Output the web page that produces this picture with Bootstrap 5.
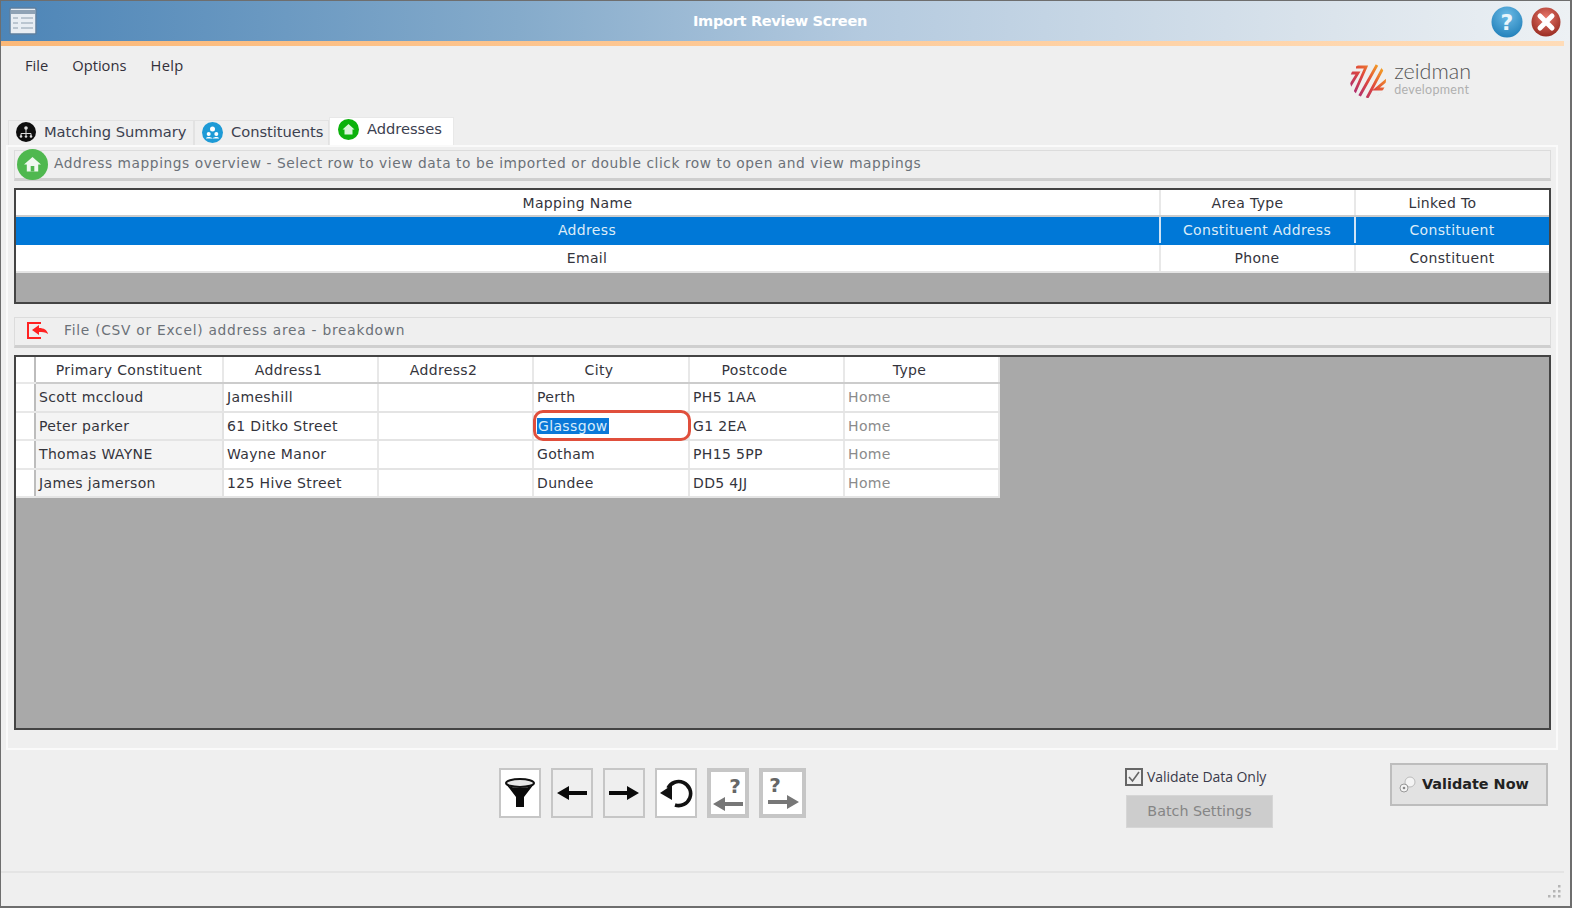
<!DOCTYPE html>
<html lang="en"><head><meta charset="utf-8"><title>Import Review Screen</title>
<link href="https://cdn.jsdelivr.net/npm/bootstrap@5.3.0/dist/css/bootstrap.min.css" rel="stylesheet">
<style>
html,body{height:100%;margin:0;background:#efefef;overflow:hidden}
body{font-family:"DejaVu Sans",Verdana,sans-serif;font-size:13.3px;color:#333}
.appwin{height:908px;width:1572px;border:1px solid #6e6e6e;border-width:1px 2px 2px 1px;background:#efefef;display:flex;flex-direction:column}
.ttl{height:40px;flex:none;background:linear-gradient(90deg,#4d85b7 0%,#85abcb 33%,#b4cadf 55%,#dbe4ec 85%,#edf1f4 100%);position:relative}
.ttl-text{font-weight:700;color:#fff;font-size:14.6px;left:0;right:11px;top:0;text-align:center;line-height:40px;position:absolute;font-family:"DejaVu Sans",sans-serif;letter-spacing:-.35px}
.accent{height:5px;margin-right:6px;flex:none;background:linear-gradient(90deg,#fbb878,#ffdcb8)}
.head-area{height:71px;flex:none;padding-left:12px;padding-right:99px}
.menu-it{padding:8px 12px 0;font-family:"Open Sans",sans-serif;font-size:14.7px;color:#33303a}
.menu-it:last-child{letter-spacing:.35px}
.logo-txt{line-height:1;font-family:"Lato",sans-serif}
.logo-a{font-size:21.5px;color:#555;font-weight:300}
.logo-b{font-size:12.5px;color:#b0b0b0;margin-top:1px;letter-spacing:.3px}
.tabs-row{padding-left:7px;height:28px;flex:none;align-items:flex-end}
.tab-it{height:25px;background:#efefef;border:1px solid #e2e2e2;border-bottom:0;padding:0 0 2px 7px;display:flex;align-items:center;gap:8px;font-size:14.7px;color:#3c4150;letter-spacing:-.05px;white-space:nowrap}
.tab-it.on{height:28px;background:#fff;border-color:#e8e8e8;padding:0 0 4px 8px;font-size:14.7px}
.tab-a{width:186px}.tab-b{width:135px;gap:8px}.tab-c{width:125px}
.frame{width:1552px;height:605px;flex:none;margin-left:5px;border:2px solid #fafafa;padding:3px 5px 0 6px;background:#efefef}
.strip{height:31px;border:1px solid #dcdcdc;border-bottom:3px solid #cfcfcf;display:flex;align-items:center;color:#6b7178;font-size:13.75px;background:#efefef;position:relative;padding-bottom:3px}
.strip-a{padding-left:39px;letter-spacing:.56px}
.strip-b{padding-left:49px;margin-top:13px;letter-spacing:.75px}
.strip-ico{position:absolute;left:2px;top:-2px}
.strip-ico2{position:absolute;left:11px;top:3px}
.well-a,.well-b{border:2px solid #444;background:#a9a9a9;margin-top:7px}
.well-a{height:116px}.well-b{height:375px}
.grid{border-collapse:collapse;table-layout:fixed;background:#fff;margin:0}
.grid td,.grid th{font-weight:400;border:0;border-right:2px solid #e8e8e8;border-bottom:2px solid #e4e4e4;padding:0;white-space:nowrap;font-size:14px;color:#34343c;letter-spacing:.35px;overflow:visible}
.grid th{text-align:center;border-bottom-color:#ccc;padding-top:2px}
.grid td{padding-top:1px}
.grid-a{width:1533px}.grid-b{width:983px}
.grid-a th{height:26px;padding-right:20px}
.grid-a td{height:28.5px;text-align:center;padding-right:1px}
.grid-a tr.sel td{height:27.500px;background:#0078d7;color:#dcecf8;border-bottom-color:#0078d7;border-right-color:#cfe3f5}
.grid-a th:last-child,.grid-a td:last-child{border-right:0}
.grid-b td{padding-left:3px;height:28.5px}
.grid-b th{height:26px;padding-right:24px}
.grid-b th.pc{padding-right:0}
.grid-b td.rh,.grid-b th.rh{padding:0;border-right:2px solid #bdbdbd;background:#fff;border-bottom-color:#e8e8e8}
.grid-b td.first{background:#f4f4f4;border-right-color:#e2e2e2}
.grid-b td.muted-t{color:#8b8b8b}
.hit{position:relative}
.hit-ring{position:absolute;left:-1px;right:-3px;top:-3px;bottom:-2px;border:3.5px solid #e04f3c;border-radius:10px;pointer-events:none}
.hit-sel{background:#0a78d8;color:#d8ecfb;padding:0 1px}
.foot{height:121px;flex:none;position:relative;padding-top:18px;padding-left:498px}
.tool{width:42px;height:50px;border:2px solid #c6c6c6;background:#efefef;margin-right:10px;padding:0;display:flex;align-items:center;justify-content:center;border-radius:0}
.tool.w{background:#fff}.tool.k{border-width:4px}.tool.wide{width:47px;margin-right:0}
.valid-box{position:absolute;left:1124px;top:16px;width:150px}
.chk{width:18px;height:18px;border:2px solid #666;background:#efefef;display:block;flex:none}
.chk-l{font-family:"Open Sans",sans-serif;font-size:14px;color:#3a3a4a;letter-spacing:-.06px}
.batch,.batch:disabled{background:#cdcdcd;border:1px solid #d6d6d6;border-radius:0;color:#858585;font-size:14.3px;width:147px;height:33px;padding:0;margin-top:8px;margin-left:1px;display:block;opacity:1}
.now{position:absolute;left:1389px;top:13px;width:158px;height:43px;background:#e2e2e2;border:2px solid #bdbdbd;border-radius:0;font-weight:700;color:#222;font-size:14.4px;padding:0 0 0 7px;display:flex;align-items:center;gap:6px}
.end-bar{height:39px;flex:none;border-top:2px solid #e4e4e4;margin-right:6px;position:relative}
.grip{position:absolute;right:2px;bottom:11px}
</style></head>
<body>
<div class="appwin">
  <div class="ttl d-flex align-items-center justify-content-between">
    <svg class="ms-2" width="28" height="28" viewBox="0 0 28 28"><rect x="1" y="1" width="26" height="26" rx="1" fill="#e8edf3" stroke="#5d7f9e" stroke-width="1.5"/><rect x="2" y="3" width="24" height="4" fill="#8fa2b5"/><g stroke="#8d9eae" stroke-width="1"><path d="M4 11h5M12 11h12M4 16h5M12 16h12M4 21h5M12 21h12"/></g></svg>
    <div class="ttl-text">Import Review Screen</div>
    <div class="d-flex align-items-center gap-2 hdr-btns" style="margin-right:9px;margin-top:2px;position:relative">
      <svg width="32" height="32" viewBox="0 0 32 32"><defs><radialGradient id="hb" cx=".5" cy=".3" r=".8"><stop offset="0" stop-color="#6cbbe6"/><stop offset="1" stop-color="#1a7ab5"/></radialGradient><radialGradient id="cb" cx=".5" cy=".35" r=".75"><stop offset="0" stop-color="#e8776a"/><stop offset="1" stop-color="#8e2218"/></radialGradient></defs><circle cx="16" cy="16" r="15.5" fill="url(#hb)"/><text x="16" y="24" text-anchor="middle" font-family="DejaVu Sans" font-weight="700" font-size="22" fill="#eaf5fb">?</text></svg>
      <svg width="30" height="30" viewBox="0 0 30 30"><circle cx="15" cy="15" r="14.5" fill="url(#cb)"/><path d="M9 9l12 12M21 9L9 21" stroke="#fff" stroke-width="5" stroke-linecap="round"/></svg>
    </div>
  </div>
  <div class="accent"></div>
  <div class="head-area d-flex justify-content-between">
    <div class="d-flex">
      <div class="menu-it">File</div><div class="menu-it">Options</div><div class="menu-it">Help</div>
    </div>
    <div class="d-flex align-items-center gap-2" style="margin-top:-3px">
      <svg width="36" height="36" viewBox="0 0 36 36"><defs><clipPath id="lc"><circle cx="18" cy="18" r="18"/></clipPath><linearGradient id="lg" gradientUnits="userSpaceOnUse" x1="2" y1="32" x2="32" y2="4"><stop offset="0" stop-color="#a82a78"/><stop offset=".5" stop-color="#e0483c"/><stop offset="1" stop-color="#f5a623"/></linearGradient></defs><g clip-path="url(#lc)" fill="none" stroke="url(#lg)" stroke-width="2.800"><path d="M-1 11H8L0 24M6 5H16L4 32M9 35L27 3M17 36L33 6M38 17L26 27H38M26 37L33 31"/></g></svg>
      <div class="logo-txt" style="padding-bottom:3px"><div class="logo-a">zeidman</div><div class="logo-b">development</div></div>
    </div>
  </div>
  <div class="tabs-row d-flex">
    <div class="tab-it tab-a"><svg width="20" height="20" viewBox="0 0 20 20"><circle cx="10" cy="10" r="10" fill="#0d0d0d"/><path d="M10 5v8M5 14v-2.500h10V14" stroke="#ddd" fill="none"/><circle cx="10" cy="6" r="1.800" fill="#ddd"/><circle cx="5" cy="14.500" r="1.300" fill="#ddd"/><circle cx="10" cy="14.500" r="1.300" fill="#ddd"/><circle cx="15" cy="14.500" r="1.300" fill="#ddd"/></svg>Matching Summary</div>
    <div class="tab-it tab-b"><svg width="21" height="21" viewBox="0 0 21 21"><circle cx="10.500" cy="10.500" r="10.500" fill="#1d9ad6"/><circle cx="10.500" cy="7" r="2.500" fill="#fff"/><circle cx="6.700" cy="12" r="2" fill="#fff"/><circle cx="14.300" cy="12" r="2" fill="#fff"/><path d="M4 16.500c0-2 5-2 6.500 0c1.500-2 6.500-2 6.500 0z" fill="#fff"/></svg>Constituents</div>
    <div class="tab-it tab-c on"><svg width="21" height="21" viewBox="0 0 21 21"><circle cx="10.500" cy="10.500" r="10.500" fill="#0cb20c"/><path d="M10.500 5l6 5.500h-2v5h-8v-5h-2z" fill="#d8f5d8"/></svg>Addresses</div>
  </div>
  <div class="frame">
    <div class="strip strip-a"><svg class="strip-ico" width="31" height="31" viewBox="0 0 31 31"><circle cx="15.500" cy="15.500" r="15.500" fill="#4fb84f"/><path d="M15.500 8l8.500 7.500h-2.800v7H9.800v-7H7z" fill="#f0f8f0"/><rect x="13.700" y="17" width="3.600" height="5.500" fill="#4fb84f"/></svg>Address mappings overview - Select row to view data to be imported or double click row to open and view mappings</div>
    <div class="well-a">
      <table class="grid grid-a">
        <colgroup><col style="width:1144px"><col style="width:195px"><col style="width:194px"></colgroup>
        <tr><th>Mapping Name</th><th>Area Type</th><th>Linked To</th></tr>
        <tr class="sel"><td>Address</td><td>Constituent Address</td><td>Constituent</td></tr>
        <tr><td>Email</td><td>Phone</td><td>Constituent</td></tr>
      </table>
    </div>
    <div class="strip strip-b"><svg class="strip-ico2" width="23" height="19" viewBox="0 0 23 19"><path d="M15 2H2v15h13" fill="none" stroke="#f22" stroke-width="2"/><path d="M13 4L6 9l7 5v-3c3 0 6 0 9 2-1-4-4-6-9-6z" fill="#f22"/></svg>File (CSV or Excel) address area - breakdown</div>
    <div class="well-b">
      <table class="grid grid-b">
        <colgroup><col style="width:19px"><col style="width:188px"><col style="width:155px"><col style="width:155px"><col style="width:156px"><col style="width:155px"><col style="width:155px"></colgroup>
        <tr><th class="rh"></th><th class="pc">Primary Constituent</th><th>Address1</th><th>Address2</th><th>City</th><th>Postcode</th><th>Type</th></tr>
        <tr><td class="rh"></td><td class="first">Scott mccloud</td><td>Jameshill</td><td></td><td>Perth</td><td>PH5 1AA</td><td class="muted-t">Home</td></tr>
        <tr><td class="rh"></td><td class="first">Peter parker</td><td>61 Ditko Street</td><td></td><td class="hit"><span class="hit-sel">Glassgow</span><div class="hit-ring"></div></td><td>G1 2EA</td><td class="muted-t">Home</td></tr>
        <tr><td class="rh"></td><td class="first">Thomas WAYNE</td><td>Wayne Manor</td><td></td><td>Gotham</td><td>PH15 5PP</td><td class="muted-t">Home</td></tr>
        <tr><td class="rh"></td><td class="first">James jamerson</td><td>125 Hive Street</td><td></td><td>Dundee</td><td>DD5 4JJ</td><td class="muted-t">Home</td></tr>
      </table>
    </div>
  </div>
  <div class="foot d-flex align-items-start">
    <button class="btn tool w" aria-label="Filter"><svg width="32" height="34" viewBox="0 0 32 34"><ellipse cx="16" cy="7" rx="14" ry="4" fill="#e8e8e8" stroke="#111" stroke-width="2"/><path d="M2 8c3 3 9 4 14 4s11-1 14-4L20 21v10h-8V21z" fill="#0a0a0a"/></svg></button>
    <button class="btn tool" aria-label="Previous"><svg width="32" height="16" viewBox="0 0 32 16"><path d="M1 8L13 1v5h18v4H13v5z" fill="#0a0a0a"/></svg></button>
    <button class="btn tool" aria-label="Next"><svg width="32" height="16" viewBox="0 0 32 16"><path d="M31 8L19 1v5H1v4h18v5z" fill="#0a0a0a"/></svg></button>
    <button class="btn tool w" aria-label="Undo"><svg width="34" height="34" viewBox="0 0 34 34"><path d="M9 12A12 12 0 1 1 16 29" fill="none" stroke="#111" stroke-width="3.600"/><path d="M1 17L13 9V24z" fill="#111"/></svg></button>
    <button class="btn tool w k" aria-label="Previous unmatched"><svg width="32" height="38" viewBox="0 0 32 38"><text x="23" y="19" text-anchor="middle" font-family="DejaVu Sans" font-weight="700" font-size="20" fill="#666">?</text><path d="M1 30l12-7v5h18v4H13v5z" fill="#777"/></svg></button>
    <button class="btn tool w wide k" aria-label="Next unmatched"><svg width="38" height="38" viewBox="0 0 38 38"><text x="11" y="18" text-anchor="middle" font-family="DejaVu Sans" font-weight="700" font-size="20" fill="#666">?</text><path d="M35 28l-12-7v5H4v4h19v5z" fill="#777"/></svg></button>
    <div class="valid-box">
      <div class="d-flex align-items-center gap-1"><span class="chk"><svg width="14" height="14" viewBox="0 0 14 14" style="display:block"><path d="M2 7l3.500 4L12 2" fill="none" stroke="#666" stroke-width="1.600"/></svg></span><span class="chk-l">Validate Data Only</span></div>
      <button class="btn batch" disabled>Batch Settings</button>
    </div>
    <button class="btn now"><svg width="17" height="17" viewBox="0 0 17 17"><circle cx="11" cy="6" r="5" fill="#f4f4f4" stroke="#bbb"/><circle cx="5" cy="12" r="4" fill="#f4f4f4" stroke="#999"/><circle cx="5" cy="12" r="1.300" fill="#888"/></svg>Validate Now</button>
  </div>
  <div class="end-bar"><svg class="grip" width="14" height="14" viewBox="0 0 14 14" fill="#b5b5b5"><rect x="10" y="0" width="2.500" height="2.500"/><rect x="5" y="5" width="2.500" height="2.500"/><rect x="10" y="5" width="2.500" height="2.500"/><rect x="0" y="10" width="2.500" height="2.500"/><rect x="5" y="10" width="2.500" height="2.500"/><rect x="10" y="10" width="2.500" height="2.500"/></svg></div>
</div>
</body></html>
